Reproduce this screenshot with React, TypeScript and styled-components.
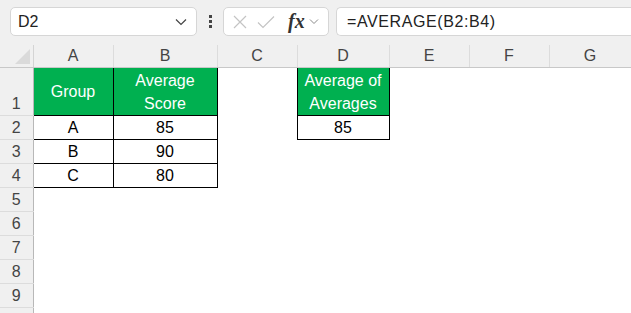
import styled, { createGlobalStyle } from 'styled-components';

const GlobalStyle = createGlobalStyle`
  html, body {
    margin: 0;
    padding: 0;
    background: #ffffff;
    overflow: hidden;
  }
  body {
    font-family: 'Liberation Sans', Arial, sans-serif;
  }
`;

const columns = [
  { label: 'A', width: 80 },
  { label: 'B', width: 104 },
  { label: 'C', width: 80 },
  { label: 'D', width: 92 },
  { label: 'E', width: 80 },
  { label: 'F', width: 80 },
  { label: 'G', width: 82 },
];

type CellData = { text?: string; kind?: 'head' | 'data' };

const empty: CellData[] = [{}, {}, {}, {}, {}, {}, {}];

const rows: { height: number; cells: CellData[]; label?: string }[] = [
  {
    height: 48,
    label: '1',
    cells: [
      { text: 'Group', kind: 'head' },
      { text: 'Average\nScore', kind: 'head' },
      {},
      { text: 'Average of\nAverages', kind: 'head' },
      {},
      {},
      {},
    ],
  },
  { height: 24, label: '2', cells: [{ text: 'A', kind: 'data' }, { text: '85', kind: 'data' }, {}, { text: '85', kind: 'data' }, {}, {}, {}] },
  { height: 24, label: '3', cells: [{ text: 'B', kind: 'data' }, { text: '90', kind: 'data' }, {}, {}, {}, {}, {}] },
  { height: 24, label: '4', cells: [{ text: 'C', kind: 'data' }, { text: '80', kind: 'data' }, {}, {}, {}, {}, {}] },
  { height: 24, label: '5', cells: empty },
  { height: 24, label: '6', cells: empty },
  { height: 24, label: '7', cells: empty },
  { height: 24, label: '8', cells: empty },
  { height: 24, label: '9', cells: empty },
  // row 10 only peeks in at the bottom edge, its number is out of view
  { height: 24, cells: empty },
];

export default function App() {
  return (
    <Page>
      <GlobalStyle />
      <Toolbar>
        <NameBox>
          <span>D2</span>
          <svg width='12' height='8' viewBox='0 0 12 8'>
            <path d='M1 1.5 L6 6.5 L11 1.5' fill='none' stroke='#444' strokeWidth='1.2' />
          </svg>
        </NameBox>
        <Dots>
          <i />
          <i />
          <i />
        </Dots>
        <FxBox>
          <svg width='14' height='14' viewBox='0 0 14 14'>
            <path d='M1 1 L13 13 M13 1 L1 13' stroke='#c4c4c4' strokeWidth='1.2' />
          </svg>
          <svg width='18' height='14' viewBox='0 0 18 14'>
            <path d='M1 7.5 L6 12.5 L17 1.5' fill='none' stroke='#c4c4c4' strokeWidth='1.2' />
          </svg>
          <FxLabel>fx</FxLabel>
          <svg width='10' height='7' viewBox='0 0 10 7'>
            <path d='M1 1.5 L5 5.5 L9 1.5' fill='none' stroke='#8a8a8a' strokeWidth='1' />
          </svg>
        </FxBox>
        <FormulaBox>=AVERAGE(B2:B4)</FormulaBox>
      </Toolbar>
      <Sheet>
        <colgroup>
          <col style={{ width: 33 }} />
          {columns.map((c) => (
            <col key={c.label} style={{ width: c.width }} />
          ))}
        </colgroup>
        <thead>
          <tr>
            <Corner>
              <Triangle />
            </Corner>
            {columns.map((c) => (
              <ColHead key={c.label}>{c.label}</ColHead>
            ))}
          </tr>
        </thead>
        <tbody>
          {rows.map((r, i) => (
            <tr key={i} style={{ height: r.height }}>
              <RowHead>{r.label}</RowHead>
              {r.cells.map((cell, j) => (
                <Cell key={j} $kind={cell.kind}>
                  {cell.text}
                </Cell>
              ))}
            </tr>
          ))}
        </tbody>
      </Sheet>
    </Page>
  );
}

const Page = styled.div`
  width: 631px;
  height: 313px;
  overflow: hidden;
  background: #ffffff;
`;

const Toolbar = styled.div`
  height: 45px;
  box-sizing: border-box;
  padding: 7px 0 9px 10px;
  background: #f0f0f0;
  display: flex;
  align-items: stretch;
`;

const NameBox = styled.div`
  width: 187px;
  box-sizing: border-box;
  background: #ffffff;
  border: 1px solid #d6d6d6;
  border-radius: 5px;
  display: flex;
  align-items: center;
  justify-content: space-between;
  padding: 0 9px 0 7px;
  font-size: 16px;
  color: #222;
`;

const Dots = styled.div`
  width: 26px;
  display: flex;
  flex-direction: column;
  align-items: center;
  justify-content: center;
  gap: 2px;
  i {
    width: 3px;
    height: 3px;
    background: #444;
  }
`;

const FxBox = styled.div`
  width: 106px;
  box-sizing: border-box;
  background: #ffffff;
  border: 1px solid #d6d6d6;
  border-radius: 5px;
  display: flex;
  align-items: center;
  padding: 0 4px 0 9px;
  gap: 10px;
`;

const FxLabel = styled.span`
  font-family: 'Liberation Serif', 'Times New Roman', serif;
  font-style: italic;
  font-weight: bold;
  font-size: 20px;
  color: #333;
  margin-left: 3px;
  margin-right: -6px;
`;

const FormulaBox = styled.div`
  flex: 1;
  margin-left: 7px;
  background: #ffffff;
  border: 1px solid #d6d6d6;
  border-right: none;
  border-radius: 5px 0 0 5px;
  display: flex;
  align-items: center;
  padding-left: 10px;
  font-size: 16px;
  color: #222;
  letter-spacing: 0.6px;
`;

const Sheet = styled.table`
  border-collapse: collapse;
  table-layout: fixed;
  width: 631px;
  font-size: 16px;
`;

const Corner = styled.th`
  height: 22px;
  background: #f0f0f0;
  border-bottom: 1px solid #c8c8c8;
  border-right: 1px solid #d4d4d4;
  position: relative;
  padding: 0;
`;

const Triangle = styled.div`
  position: absolute;
  right: 3px;
  bottom: 3px;
  width: 0;
  height: 0;
  border-left: 15px solid transparent;
  border-bottom: 15px solid #dadada;
`;

const ColHead = styled.th`
  background: #f0f0f0;
  border-bottom: 1px solid #c8c8c8;
  border-right: 1px solid #dcdcdc;
  font-weight: normal;
  color: #444;
  font-size: 16px;
  padding: 0;
`;

const RowHead = styled.td`
  background: #f0f0f0;
  border-right: 1px solid #b8b8b8;
  border-bottom: 1px solid #dcdcdc;
  color: #444;
  text-align: center;
  vertical-align: bottom;
  padding: 0 0 2px;
  font-size: 16px;
`;

const Cell = styled.td<{ $kind?: 'head' | 'data' }>`
  padding: 0 2px;
  text-align: center;
  vertical-align: middle;
  white-space: pre-line;
  line-height: 23px;
  color: ${(p) => (p.$kind === 'head' ? '#ffffff' : '#000000')};
  background: ${(p) => (p.$kind === 'head' ? '#00b050' : '#ffffff')};
  border: ${(p) => (p.$kind ? '1px solid #000000' : 'none')};
`;
